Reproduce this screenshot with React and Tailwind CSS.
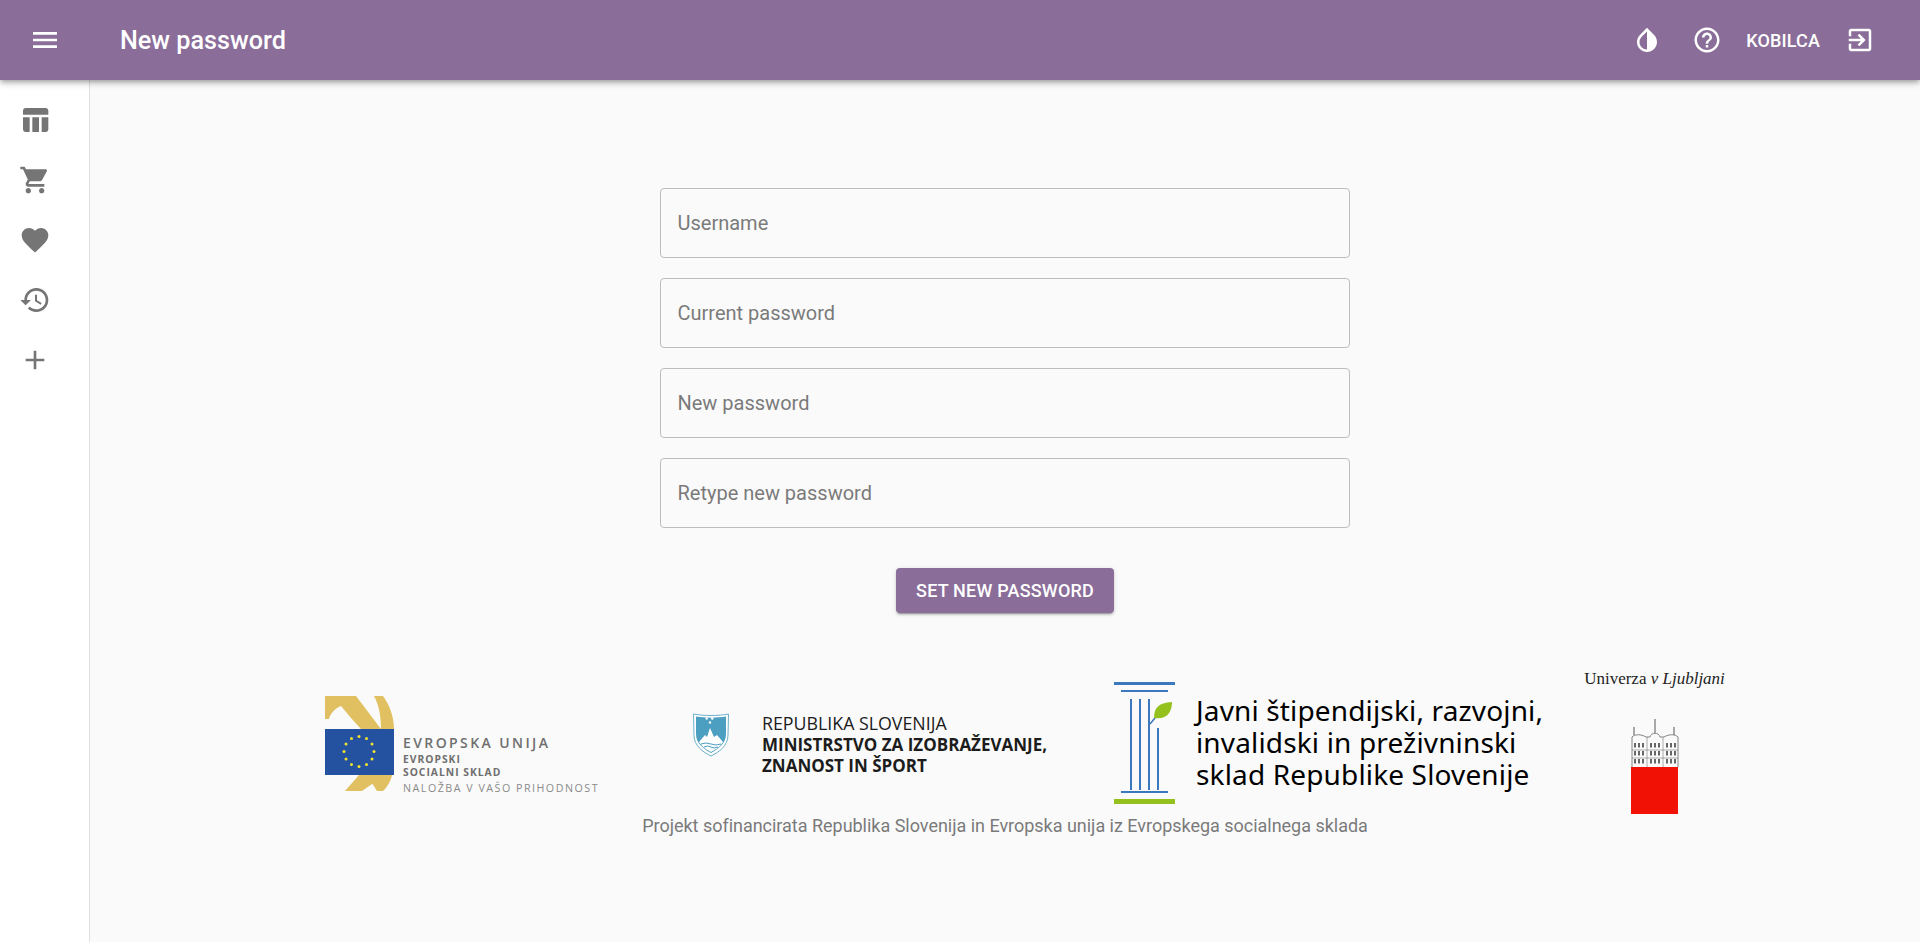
import React from "react";

const P = ({ d, size = 32, className = "" }) => (
  <svg viewBox="0 0 24 24" width={size} height={size} fill="currentColor" className={className}><path d={d} /></svg>
);

const ICONS = {
  menu: "M3 18h18v-2H3v2zm0-5h18v-2H3v2zm0-7v2h18V6H3z",
  table: "M10 10.02h5V21h-5zM17 21h3c1.1 0 2-.9 2-2v-9h-5v11zm3-18H5c-1.1 0-2 .9-2 2v3h19V5c0-1.1-.9-2-2-2zM3 19c0 1.1.9 2 2 2h3V10H3v9z",
  cart: "M7 18c-1.1 0-1.99.9-1.99 2S5.9 22 7 22s2-.9 2-2-.9-2-2-2zM1 2v2h2l3.6 7.59-1.35 2.45c-.16.28-.25.61-.25.96 0 1.1.9 2 2 2h12v-2H7.42c-.14 0-.25-.11-.25-.25l.03-.12.9-1.63h7.45c.75 0 1.41-.41 1.75-1.03l3.58-6.49c.08-.14.12-.31.12-.48 0-.55-.45-1-1-1H5.21l-.94-2H1zm16 16c-1.1 0-1.99.9-1.99 2s.89 2 1.99 2 2-.9 2-2-.9-2-2-2z",
  heart: "M12 21.35l-1.45-1.32C5.4 15.36 2 12.28 2 8.5 2 5.42 4.42 3 7.5 3c1.74 0 3.41.81 4.5 2.09C13.09 3.81 14.76 3 16.5 3 19.58 3 22 5.42 22 8.5c0 3.78-3.4 6.86-8.55 11.54L12 21.35z",
  history: "M13 3c-4.97 0-9 4.03-9 9H1l3.89 3.89.07.14L9 12H6c0-3.87 3.13-7 7-7s7 3.13 7 7-3.13 7-7 7c-1.93 0-3.68-.79-4.94-2.06l-1.42 1.42C8.27 19.99 10.51 21 13 21c4.97 0 9-4.03 9-9s-4.03-9-9-9zm-1 5v5l4.28 2.54.72-1.21-3.5-2.08V8H12z",
  add: "M19 13h-6v6h-2v-6H5v-2h6V5h2v6h6v2z",
  invert: "M17.66 7.93L12 2.27 6.34 7.93c-3.12 3.12-3.12 8.19 0 11.31C7.9 20.8 9.95 21.58 12 21.58c2.05 0 4.1-.78 5.66-2.34 3.12-3.12 3.12-8.19 0-11.31zM12 19.59c-1.6 0-3.11-.62-4.24-1.76C6.62 16.69 6 15.19 6 13.59s.62-3.11 1.76-4.24L12 5.1v14.49z",
  help: "M11 18h2v-2h-2v2zm1-16C6.48 2 2 6.48 2 12s4.48 10 10 10 10-4.48 10-10S17.52 2 12 2zm0 18c-4.41 0-8-3.59-8-8s3.59-8 8-8 8 3.59 8 8-3.59 8-8 8zm0-14c-2.21 0-4 1.79-4 4h2c0-1.1.9-2 2-2s2 .9 2 2c0 2-3 1.75-3 5h2c0-2.25 3-2.5 3-5 0-2.21-1.79-4-4-4z",
  exit: "M10.09 15.59L11.5 17l5-5-5-5-1.41 1.41L12.67 11H3v2h9.67l-2.58 2.59zM19 3H5c-1.11 0-2 .9-2 2v4h2V5h14v14H5v-4H3v4c0 1.1.89 2 2 2h14c1.1 0 2-.9 2-2V5c0-1.1-.9-2-2-2z",
};

const EuEmblem = () => {
  const stars = Array.from({ length: 12 }, (_, i) => {
    const a = (i * Math.PI) / 6;
    return [34 + 15 * Math.sin(a), 22.6 - 15 * Math.cos(a)];
  });
  return (
    <svg width="70" height="96" viewBox="0 0 70 96" className="shrink-0">
      <path d="M0 0H31L56 33H36L26 22L16 10C10 12 5 18 4 23H0Z" fill="#e0c060" />
      <path d="M49 0H58C64 8 69 20 69 33H56C56 20 54 9 49 0Z" fill="#e0c060" />
      <rect x="0" y="33" width="69" height="46" fill="#2452a0" />
      <g transform="translate(0 33)">
        {stars.map(([x, y], i) => <circle key={i} cx={x} cy={y} r="1.5" fill="#f3e32c" />)}
      </g>
      <path d="M20 95L34 79H42L50 86L37 95Z" fill="#e0c060" />
      <path d="M42 79H67C66 85 62 91 58 95H52Z" fill="#e0c060" />
    </svg>
  );
};

const Shield = () => (
  <svg width="36" height="44" viewBox="0 0 36 44" className="shrink-0">
    <path d="M0.5 1C10 3 26 3 35.5 1L35 22C35 33 26 39 18 43C10 39 1 33 1 22Z" fill="#fff" stroke="#6eb0cc" strokeWidth="1" />
    <path d="M3 3.5C12 5 24 5 33 3.5V21C33 31 25 36 18 40C11 36 3 31 3 21Z" fill="#4d9fc2" />
    <path d="M6 29L12 22L14 24L17 15L21 24L24 22L30 29C27 34 22 37 18 39C14 37 9 34 6 29Z" fill="#fff" />
    <path d="M8 31Q13 29 18 31T28 31M11 34Q15 32 18 34T25 34" fill="none" stroke="#4d9fc2" strokeWidth="1" />
    <circle cx="13.7" cy="5.5" r="1.2" fill="#fff" /><circle cx="19.3" cy="5.5" r="1.2" fill="#fff" /><circle cx="17" cy="9.5" r="1.2" fill="#fff" />
  </svg>
);

const Column = () => (
  <svg width="62" height="122" viewBox="0 0 62 122" className="shrink-0">
    <rect x="0" y="0" width="61" height="3" fill="#3b78bd" />
    <rect x="7" y="8" width="47" height="2" fill="#3b78bd" />
    <rect x="16" y="17" width="2" height="91" fill="#3b78bd" />
    <rect x="25" y="17" width="2" height="91" fill="#3b78bd" />
    <rect x="34" y="17" width="2" height="91" fill="#3b78bd" />
    <rect x="43" y="46" width="2" height="62" fill="#3b78bd" />
    <path d="M36 42L41 36" stroke="#3b78bd" strokeWidth="1.5" />
    <path d="M40 36C40 26 44 21 58 20C58 30 53 38 40 36Z" fill="#95c11f" />
    <rect x="7" y="109" width="47" height="2" fill="#3b78bd" />
    <rect x="0" y="117" width="61" height="5" fill="#95c11f" />
  </svg>
);

const Building = () => {
  const windows = [];
  for (let r = 0; r < 3; r++) {
    for (const x of [3, 7, 11, 19, 23, 27, 35, 39, 43]) {
      windows.push(<rect key={`${r}-${x}`} x={x} y={24 + r * 8} width="2" height="4.5" fill="#666" />);
    }
  }
  return (
    <svg width="48" height="95" viewBox="0 0 48 95" className="shrink-0">
      <path d="M24 0V14M3 8V16M43 8V16" stroke="#444" strokeWidth="0.9" fill="none" />
      <path d="M1 48V18C4 15 10 15 15 18H19C20 13 28 13 29 18H33C38 15 44 15 47 18V48" fill="none" stroke="#777" strokeWidth="0.9" />
      <path d="M16 18V48M32 18V48M1 31H47M1 39H47" stroke="#888" strokeWidth="0.7" fill="none" />
      {windows}
      <rect x="0" y="48" width="47" height="47" fill="#f21205" />
    </svg>
  );
};

const Field = ({ placeholder, type = "text" }) => (
  <input
    type={type}
    placeholder={placeholder}
    className="h-[70px] w-[690px] rounded border border-[#bdbdbd] bg-transparent px-[16.5px] text-[20px] text-[#424242] placeholder:text-[#7a7a7a] outline-none"
  />
);

export default function App() {
  return (
    <div className="flex h-screen flex-col overflow-hidden bg-[#fafafa] font-['Roboto',sans-serif]">
      <header className="relative z-10 flex h-[80px] shrink-0 items-center bg-[#8a6d99] text-white shadow-[0_2px_4px_-1px_rgba(0,0,0,0.2),0_4px_5px_0_rgba(0,0,0,0.14),0_1px_10px_0_rgba(0,0,0,0.12)]">
        <div className="flex w-[90px] justify-center"><P d={ICONS.menu} /></div>
        <h1 className="ml-[30px] mt-[2px] text-[25.2px] font-medium">New password</h1>
        <div className="ml-auto flex items-center pr-[45px]">
          <P d={ICONS.invert} size={30} />
          <P d={ICONS.help} size={30} className="ml-[30px]" />
          <span className="ml-[24px] text-[18px] font-medium tracking-[0.15px]">KOBILCA</span>
          <P d={ICONS.exit} size={30} className="ml-[25px]" />
        </div>
      </header>
      <div className="flex min-h-0 flex-1">
        <aside className="flex w-[90px] shrink-0 flex-col items-start border-r border-[#e0e0e0] bg-white pt-[10px] pl-[19px] text-[#757575]">
          {[ICONS.table, ICONS.cart, ICONS.heart, ICONS.history, ICONS.add].map((d, i) => (
            <div key={i} className="flex h-[60px] items-center justify-center"><P d={d} /></div>
          ))}
        </aside>
        <main className="flex min-w-0 flex-1 flex-col items-center pt-[108px]">
          <form className="flex flex-col items-center gap-[20px]">
            <Field placeholder="Username" />
            <Field placeholder="Current password" />
            <Field placeholder="New password" />
            <Field placeholder="Retype new password" />
            <button type="button" className="mt-[20px] h-[45px] w-[218px] rounded bg-[#8a6d99] text-[18px] font-medium tracking-[0.2px] text-white shadow-[0_3px_1px_-2px_rgba(0,0,0,0.2),0_2px_2px_0_rgba(0,0,0,0.14),0_1px_5px_0_rgba(0,0,0,0.12)]">
              SET NEW PASSWORD
            </button>
          </form>
          <div className="mt-[56px] flex w-full items-start pl-[235px]">
            <div className="mt-[27px] flex w-[368px] shrink-0 items-start gap-[8px] font-['Open_Sans',sans-serif] text-[#6f6f6f]">
              <EuEmblem />
              <div className="mt-[39px] whitespace-nowrap">
                <div className="text-[14px] leading-[15px] font-semibold tracking-[2.4px]">EVROPSKA UNIJA</div>
                <div className="mt-[3px] text-[10.3px] leading-[13px] font-bold tracking-[1px]">EVROPSKI</div>
                <div className="text-[10.3px] leading-[13px] font-bold tracking-[1px]">SOCIALNI SKLAD</div>
                <div className="mt-[2px] text-[10.7px] leading-[14px] tracking-[1.5px] text-[#8a8a8a]">NALOŽBA V VAŠO PRIHODNOST</div>
              </div>
            </div>
            <div className="mt-[44px] flex w-[421px] shrink-0 items-start gap-[33px] font-['Open_Sans',sans-serif] text-[#1c1c1c]">
              <Shield />
              <div className="whitespace-nowrap text-[17px] leading-[21px]">
                <div className="text-[17.8px]">REPUBLIKA SLOVENIJA</div>
                <div className="font-bold">MINISTRSTVO ZA IZOBRAŽEVANJE,</div>
                <div className="font-bold">ZNANOST IN ŠPORT</div>
              </div>
            </div>
            <div className="mt-[13px] flex w-[470px] shrink-0 items-start gap-[20px] font-['Noto_Sans',sans-serif] text-black">
              <Column />
              <div className="mt-[12px] whitespace-nowrap text-[28px] leading-[32px] tracking-[0.15px]">
                <div>Javni štipendijski, razvojni,</div>
                <div>invalidski in preživninski</div>
                <div>sklad Republike Slovenije</div>
              </div>
            </div>
            <div className="mt-[1px] flex w-[141px] shrink-0 flex-col items-center">
              <div className="whitespace-nowrap font-['Liberation_Serif',serif] text-[17px] leading-[18px] text-[#222]">Univerza <span className="italic">v Ljubljani</span></div>
              <div className="mt-[31px]"><Building /></div>
            </div>
          </div>
          <p className="text-[18px] leading-[24px] tracking-[-0.02px] text-[#7a7a7a]">Projekt sofinancirata Republika Slovenija in Evropska unija iz Evropskega socialnega sklada</p>
        </main>
      </div>
    </div>
  );
}
